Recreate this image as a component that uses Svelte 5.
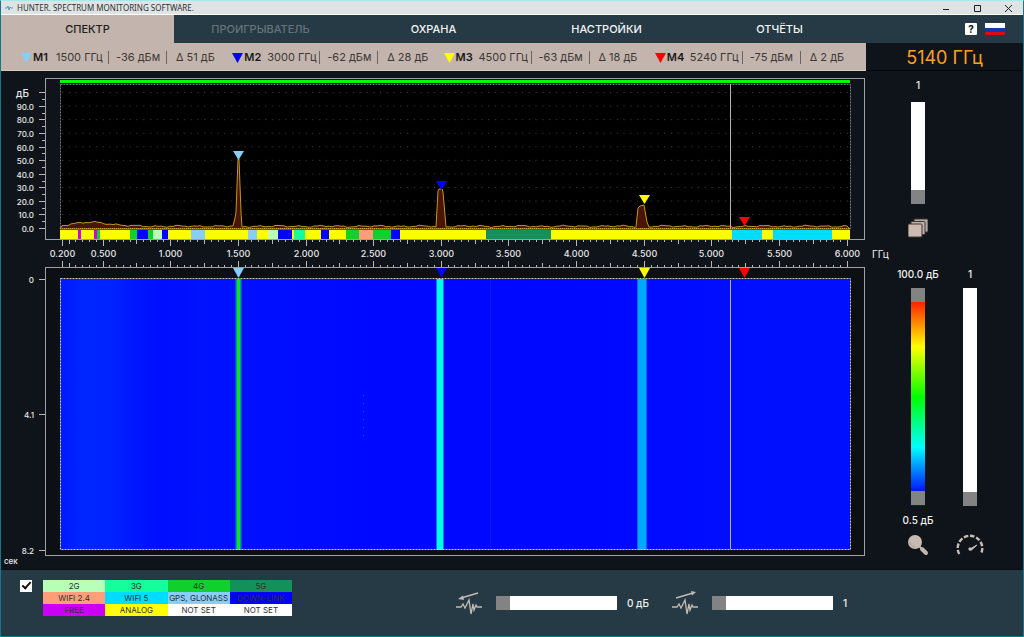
<script lang="ts">
    const tabs = [
        { name: 'СПЕКТР', active: true },
        { name: 'ПРОИГРЫВАТЕЛЬ', disabled: true },
        { name: 'ОХРАНА' },
        { name: 'НАСТРОЙКИ' },
        { name: 'ОТЧЁТЫ' }
    ];

    const markers = [
        { name: 'M1', freq: '1500 ГГц', level: '-36 дБм', delta: '51 дБ', color: '#87cefa', x: 238.5, y: 160 },
        { name: 'M2', freq: '3000 ГГц', level: '-62 дБм', delta: '28 дБ', color: '#0000ff', x: 441.5, y: 190 },
        { name: 'M3', freq: '4500 ГГц', level: '-63 дБм', delta: '18 дБ', color: '#ffff00', x: 644.5, y: 204 },
        { name: 'M4', freq: '5240 ГГц', level: '-75 дБм', delta: '2 дБ', color: '#ff0000', x: 744.5, y: 226 }
    ];

    const YELLOW = '#ffff00';
    const GREEN = '#0fd02c';
    const BLUE = '#0000ff';
    const SKY = '#87cefa';
    const MINT = '#b8ffb8';
    const CYAN = '#00dcff';
    const MAGENTA = '#cc00f5';
    const AQUA = '#14ff9c';
    const SALMON = '#ff9e78';
    const PINE = '#14905a';

    const legend = [
        [
            { name: '2G', color: MINT },
            { name: '3G', color: AQUA },
            { name: '4G', color: GREEN },
            { name: '5G', color: PINE }
        ],
        [
            { name: 'WIFI 2.4', color: SALMON },
            { name: 'WIFI 5', color: CYAN },
            { name: 'GPS, GLONASS', color: SKY },
            { name: 'DOWN-LINK', color: BLUE }
        ],
        [
            { name: 'FREE', color: MAGENTA },
            { name: 'ANALOG', color: YELLOW },
            { name: 'NOT SET', color: '#ffffff' },
            { name: 'NOT SET', color: '#ffffff' }
        ]
    ];

    // allocated bands, everything between them is analog
    const bands: [number, number, string][] = [
        [78, 81, MAGENTA],
        [94, 97, MAGENTA],
        [97, 100, GREEN],
        [130, 137, GREEN],
        [137, 148, BLUE],
        [148, 153, GREEN],
        [153, 162, MINT],
        [162, 168, BLUE],
        [191, 205, SKY],
        [248, 257, SKY],
        [268, 278, MINT],
        [278, 292, BLUE],
        [294, 305, AQUA],
        [321, 329, BLUE],
        [346, 359, GREEN],
        [359, 373, SALMON],
        [373, 391, GREEN],
        [391, 400, BLUE],
        [486, 551, PINE],
        [732, 762, CYAN],
        [773, 832, CYAN]
    ];

    const freqX = (f: number) => Math.floor(35.4 + 135.3 * f) + 0.5;
    const levelY = (db: number) => Math.round(228 - db * 1.357) + 0.5;

    const freqLabels = [0.2, 0.5, 1, 1.5, 2, 2.5, 3, 3.5, 4, 4.5, 5, 5.5, 6];

    function tickSize(step: number) {
        if (step % 10 === 0 || step === 4) return 6;
        return step % 5 === 0 ? 4 : 2;
    }

    // one tick every 50 MHz
    const freqTicks = Array.from({ length: 117 }, (_, i) => {
        const step = i + 4;
        return { x: freqX(step / 20), size: tickSize(step) };
    });

    const levels = [0, 10, 20, 30, 40, 50, 60, 70, 80, 90, 100];
    const minorLevels = levels.slice(0, 10).map((l) => l + 5);

    const times = [
        { label: '0', y: 279.5 },
        { label: '4.1', y: 414.5 },
        { label: '8.2', y: 550.5 }
    ];

    function noise(x: number) {
        return Math.sin(x * 0.31) * 0.6 + Math.sin(x * 0.83 + 2) * 0.4 + Math.sin(x * 0.13) * 0.3;
    }

    const peaks = [
        [[233, 226], [235, 218], [236, 212], [238, 159], [239, 159], [241, 212], [242, 227]],
        [[436, 227], [438, 191], [439, 189], [442, 189], [443, 192], [446, 227]],
        [[636, 227], [638, 208], [640, 206], [644, 205], [647, 222], [649, 227]]
    ];

    function buildTrace() {
        const points: number[][] = [[60, 229]];
        for (let x = 62; x < 849; x += 3) {
            const peak = peaks.find((p) => x >= p[0][0] && x < p[0][0] + 3);
            if (peak) {
                points.push(...peak);
                x = peak[peak.length - 1][0];
                continue;
            }
            const hump = 4 * Math.exp(-(((x - 92) / 26) ** 2));
            points.push([x, Math.round((226.3 - hump + noise(x)) * 10) / 10]);
        }
        points.push([850, 229]);
        return points.map((p) => p.join(',')).join(' ');
    }

    const trace = buildTrace();

    let showBands = $state(true);
    let averaging = $state(1);
    let upper = $state(100);
    let lower = $state(0.5);
    let speed = $state(1);
    let offset = $state(0);
    let gain = $state(1);
</script>

<div class="window">
    <header class="titlebar">
        <svg class="app-icon" viewBox="0 0 8 8" aria-hidden="true">
            <path d="M0 4h2l1-2 1 4 1-3 1 1h2" fill="none" stroke="#4aa0c0" />
        </svg>
        <span class="title">HUNTER. SPECTRUM MONITORING SOFTWARE.</span>
        <div class="window-buttons">
            <button aria-label="Свернуть"><svg viewBox="0 0 9 9"><path d="M1 5.5h6" /></svg></button>
            <button aria-label="Развернуть"><svg viewBox="0 0 9 9"><path d="M1.5 1.5h6v6h-6z" /></svg></button>
            <button aria-label="Закрыть"><svg viewBox="0 0 9 9"><path d="M1 1l7 7M8 1l-7 7" /></svg></button>
        </div>
    </header>

    <div class="topbar">
        <nav class="tabs">
            {#each tabs as tab}
                <button class="tab" class:active={tab.active} disabled={tab.disabled}>{tab.name}</button>
            {/each}
        </nav>
        <div class="tools">
            <button class="help" aria-label="Справка">?</button>
            <button class="flag" aria-label="Русский">
                <svg viewBox="0 0 20 13">
                    <path fill="#ffffff" d="M0 0h20v5H0z" />
                    <path fill="#1238b0" d="M0 5h20v4H0z" />
                    <path fill="#e00808" d="M0 9h20v2l-1 1H1l-1-1z" />
                </svg>
            </button>
        </div>
    </div>

    <div class="content">
        <main>
            <div class="marker-bar">
                {#each markers as m}
                    <div class="marker">
                        <svg viewBox="0 0 11 10" aria-hidden="true"><path d="M0 0h11l-5.5 10z" fill={m.color} /></svg>
                        <strong>{m.name}</strong>
                        <span class="freq">{m.freq}</span>
                        <span class="level">{m.level}</span>
                        <span class="delta">Δ {m.delta}</span>
                    </div>
                {/each}
            </div>

            <svg class="charts" viewBox="1 71 865 498" role="img" aria-label="Спектр и водопад">
                <defs>
                    <pattern id="dots" x="62" y="92" width="6.765" height="13.57" patternUnits="userSpaceOnUse">
                        <rect width="1.2" height="1" fill="#3c3c3c" />
                    </pattern>
                    <linearGradient id="waterfall">
                        <stop offset="0" stop-color="#0018ff" />
                        <stop offset="0.03" stop-color="#0026ff" />
                        <stop offset="0.07" stop-color="#0022ff" />
                        <stop offset="0.09" stop-color="#0018ff" />
                        <stop offset="0.13" stop-color="#000eff" />
                        <stop offset="0.18" stop-color="#0012ff" />
                        <stop offset="0.4" stop-color="#0008ff" />
                        <stop offset="0.7" stop-color="#0008ff" />
                        <stop offset="0.9" stop-color="#0010ff" />
                        <stop offset="1" stop-color="#0010ff" />
                    </linearGradient>
                </defs>

                <!-- spectrum -->
                <rect x="45.5" y="78.5" width="819" height="161" fill="#0f141a" stroke="#a0a0a4" />
                <rect x="60" y="83" width="790" height="146" fill="#000000" />
                <rect x="61" y="85" width="788" height="143" fill="url(#dots)" />
                <rect x="60" y="80" width="790" height="3" fill="#00ff00" />
                <rect class="dashed" x="60.5" y="84.5" width="790" height="144" />
                <polygon points={trace} fill="#4c1408" stroke="#c0981c" />
                <path class="baseline" d="M60 228.5h790" />
                <rect x="60" y="230" width="790" height="9" fill={YELLOW} />
                {#if showBands}
                    {#each bands as [from, to, color]}
                        <rect x={from} y="230" width={to - from} height="9" fill={color} />
                    {/each}
                {/if}
                <path class="cursor" d="M730.5 84v145" />

                {#each levels as l}
                    <path class="tick" d="M39 {levelY(l)}h6" />
                    {#if l < 100}
                        <text x="34" y={levelY(l) + 3} class="y-label">{l.toFixed(1)}</text>
                    {/if}
                {/each}
                <text x="16" y={levelY(100) + 4}>дБ</text>
                {#each minorLevels as l}
                    <path class="tick" d="M42 {levelY(l)}h3" />
                {/each}

                <!-- frequency axis -->
                {#each freqTicks as t}
                    <path class="tick" d="M{t.x} 240v{t.size}M{t.x} 267v-{t.size}" />
                {/each}
                {#each freqLabels as f}
                    <text x={freqX(f)} y="257" class="x-label">{f.toFixed(3)}</text>
                {/each}

                <!-- waterfall -->
                <rect x="45.5" y="267.5" width="819" height="288" fill="#0c1014" stroke="#a0a0a4" />
                <rect x="60" y="279" width="790" height="271" fill="url(#waterfall)" />
                <rect x="235" y="279" width="7" height="271" fill="#0050e8" />
                <rect x="236" y="279" width="5" height="271" fill="#0a94a0" />
                <rect x="237" y="279" width="3" height="271" fill="#10e420" />
                <rect x="436" y="279" width="8" height="271" fill="#0078ff" />
                <rect x="437" y="279" width="6" height="271" fill="#00ffe0" />
                <rect x="637" y="279" width="10" height="271" fill="#0068ff" />
                <rect x="638" y="279" width="8" height="271" fill="#00a8ff" />
                <path d="M490.5 280v269" stroke="#0c14ff" />
                <path d="M363.5 395v45" stroke="#2848ff" stroke-dasharray="1 7" />
                <path class="cursor" d="M730.5 280v269" />
                <rect class="dashed bright" x="60.5" y="278.5" width="790" height="271" />

                {#each times as t}
                    <path class="tick" d="M39 {t.y}h6" />
                    <text x="34" y={t.y + 3} class="y-label">{t.label}</text>
                {/each}
                <text x="4" y="564" class="axis-unit">сек</text>

                {#each markers as m}
                    <path d="M{m.x - 5.5} {m.y - 9}h11l-5.5 9z" fill={m.color} />
                    <path d="M{m.x - 5.5} 268h11l-5.5 10z" fill={m.color} />
                {/each}
            </svg>
        </main>

        <aside>
            <div class="current-freq">5140 ГГц</div>
            <span class="axis-name">ГГц</span>

            <div class="averaging">
                <label for="averaging">{averaging}</label>
                <input id="averaging" class="vertical short" type="range" min="1" max="20" bind:value={averaging} />
                <button class="icon-button" aria-label="Слои">
                    <svg width="20" height="20" viewBox="0 0 20 20" stroke="#3a3634">
                        <rect x="6" y="1" width="14" height="13" rx="1" fill="#b5aaa4" />
                        <rect x="3" y="3.5" width="14" height="13" rx="1" fill="#bfb2ab" />
                        <rect x="0" y="6" width="14" height="13" rx="1" fill="#cdbab0" />
                    </svg>
                </button>
            </div>

            <div class="range-controls">
                <label for="upper">{upper.toFixed(1)} дБ</label>
                <label for="speed">{speed}</label>
                <div class="dual">
                    <input id="upper" class="vertical" type="range" min="0" max="100" step="0.5" bind:value={upper} />
                    <input id="lower" class="vertical" type="range" min="0" max="100" step="0.5" bind:value={lower} />
                </div>
                <input id="speed" class="vertical" type="range" min="1" max="20" bind:value={speed} />
                <label for="lower">{lower.toFixed(1)} дБ</label>
                <span></span>
                <button class="icon-button" aria-label="Масштаб">
                    <svg width="22" height="22" viewBox="0 0 22 22">
                        <path d="M12 12l3 3" stroke="#c2b5ae" stroke-width="2" />
                        <path d="M15 15l4 4" stroke="#c2b5ae" stroke-width="4" stroke-linecap="round" />
                        <circle cx="8" cy="8" r="7" fill="#c8bab2" />
                        <path d="M3 8a5 5 0 0 0 5 5" stroke="#a89c94" fill="none" />
                    </svg>
                </button>
                <button class="icon-button" aria-label="Скорость">
                    <svg width="28" height="22" viewBox="0 0 28 22" fill="none" stroke="#c8beb8">
                        <path d="M3.2 20a12.3 12.3 0 1 1 21.6 0" stroke-width="2.4" stroke-dasharray="4.5 1.8" />
                        <path d="M13 15.5l8-4.5-5.5 5z" fill="#c8beb8" />
                        <circle cx="14" cy="15" r="1.2" fill="#c8beb8" />
                    </svg>
                </button>
            </div>
        </aside>
    </div>

    <footer>
        <input type="checkbox" class="show-bands" aria-label="Показать диапазоны" bind:checked={showBands} />
        <table class="legend">
            <tbody>
                {#each legend as row}
                    <tr>
                        {#each row as cell}
                            <td style="background: {cell.color}">{cell.name}</td>
                        {/each}
                    </tr>
                {/each}
            </tbody>
        </table>
        <div class="levels">
            <div class="level-control">
                <svg width="28" height="24" viewBox="0 0 28 24" fill="none" stroke="#c2bab4" aria-hidden="true">
                    <path d="M23 2L6 7" stroke-width="1.5" />
                    <path d="M3 8l5-3.5 1 4.5z" fill="#c2bab4" stroke="none" />
                    <path d="M1 16h5l2-3 2 4 2-4 2-4 2 14 2-10 1 6 2-5 1 2h5" stroke-width="1.3" />
                </svg>
                <input id="offset" type="range" min="0" max="50" aria-label="Смещение" bind:value={offset} />
                <label for="offset">{offset} дБ</label>
            </div>
            <div class="level-control">
                <svg width="28" height="24" viewBox="0 0 28 24" fill="none" stroke="#c2bab4" aria-hidden="true">
                    <path d="M5 7l17-5" stroke-width="1.5" />
                    <path d="M25 1l-5-1 1 4.5z" fill="#c2bab4" stroke="none" />
                    <path d="M1 16h5l2-3 2 4 2-4 2-4 2 14 2-10 1 6 2-5 1 2h5" stroke-width="1.3" />
                </svg>
                <input id="gain" type="range" min="1" max="20" aria-label="Усиление" bind:value={gain} />
                <label for="gain">{gain}</label>
            </div>
        </div>
    </footer>
</div>

<style>
    :global(body) {
        background: #0f141a;
    }

    .window {
        box-sizing: border-box;
        min-height: 100vh;
        display: flex;
        flex-direction: column;
        border: 1px solid #14788a;
        border-top-color: #a8e6f0;
        background: #0f141a;
        color: #f0f0f0;
        font-family: Inter, "Liberation Sans", sans-serif;
        font-size: 10px;
    }

    button {
        padding: 0;
        border: none;
        background: none;
        font-family: inherit;
        cursor: pointer;
    }

    .titlebar {
        display: flex;
        align-items: center;
        height: 13px;
        padding-left: 4px;
        background: #dfe3e4;
        border-bottom: 1px solid #ffffff;
        color: #303030;
    }

    .app-icon {
        width: 8px;
        height: 8px;
        margin-right: 4px;
    }

    .title {
        font-family: "Noto Sans", sans-serif;
        font-size: 8px;
        line-height: 12px;
    }

    .window-buttons {
        display: flex;
        gap: 22px;
        margin-left: auto;
        padding: 2px 10px 0 0;
    }

    .window-buttons button {
        display: flex;
    }

    .window-buttons svg {
        width: 9px;
        height: 9px;
        fill: none;
        stroke: #202020;
    }

    .topbar,
    .content {
        display: grid;
        grid-template-columns: 1fr 157px;
    }

    .topbar {
        height: 28px;
        background: #263a45;
    }

    .tabs {
        display: grid;
        grid-template-columns: repeat(5, 1fr);
    }

    .tab {
        color: #f4f4f4;
        font-size: 11px;
        font-weight: 500;
    }

    .tab.active {
        background: #c3b5ad;
        color: #202020;
    }

    .tab:disabled {
        color: #66737b;
        cursor: default;
    }

    .tools {
        display: flex;
        align-items: center;
        justify-content: flex-end;
        gap: 8px;
        padding-right: 18px;
    }

    .help {
        width: 12px;
        height: 12px;
        border-radius: 1px;
        background: #ffffff;
        color: #101010;
        font-size: 10px;
        font-weight: 700;
        line-height: 12px;
    }

    .flag {
        display: flex;
        width: 20px;
    }

    .marker-bar {
        box-sizing: border-box;
        display: grid;
        grid-template-columns: repeat(4, 1fr);
        height: 28px;
        padding: 2px 0 0 20px;
        background: #c3b5ad;
        border-bottom: 1px solid #d2cbc6;
        color: #3c3836;
        font-size: 11px;
        line-height: 13px;
        white-space: nowrap;
    }

    .marker {
        display: grid;
        grid-template-columns: 12px 23px 53px 58px 1fr;
        align-items: center;
    }

    .marker svg {
        width: 11px;
        height: 10px;
    }

    .marker strong {
        color: #181818;
        font-weight: 600;
    }

    .freq,
    .level {
        border-right: 1px solid #6a6461;
    }

    .level {
        padding-left: 7px;
    }

    .delta {
        padding-left: 9px;
    }

    .charts {
        display: block;
        width: 100%;
        background: #0f141a;
    }

    .charts text {
        fill: #e8e8e8;
        font-size: 10px;
        font-weight: 500;
    }

    .charts .y-label {
        font-size: 8px;
        text-anchor: end;
    }

    .charts .x-label {
        font-size: 9px;
        text-anchor: middle;
    }

    .charts .axis-unit {
        font-size: 8px;
    }

    .tick {
        stroke: #b8b8b8;
    }

    .dashed {
        fill: none;
        stroke: #7c7c7c;
        stroke-dasharray: 2 1;
    }

    .dashed.bright {
        stroke: #d0d0c0;
    }

    .baseline {
        stroke: #c0b030;
        stroke-dasharray: 1 1;
    }

    .cursor {
        stroke: #b4b4b4;
    }

    aside {
        position: relative;
        display: flex;
        flex-direction: column;
    }

    .current-freq {
        box-sizing: border-box;
        height: 28px;
        border-bottom: 1px solid #04070a;
        color: #ffa01e;
        font-size: 18px;
        line-height: 30px;
        text-align: center;
    }

    /* unit of the frequency axis, hangs over the chart's right edge */
    .axis-name {
        position: absolute;
        top: 204px;
        left: 6px;
        line-height: 14px;
    }

    aside label {
        line-height: 14px;
        font-weight: 500;
        white-space: nowrap;
    }

    .averaging {
        display: flex;
        flex-direction: column;
        align-items: center;
        width: 52px;
        gap: 10px;
        padding: 7px 0 29px 26px;
    }

    .averaging .icon-button {
        padding-top: 4px;
    }

    .range-controls {
        display: grid;
        grid-template-columns: 52px 52px;
        gap: 7px 0;
        justify-items: center;
        padding-left: 26px;
    }

    .icon-button {
        display: flex;
    }

    input[type="range"] {
        appearance: none;
        display: block;
        width: 121px;
        height: 14px;
        margin: 0;
        background: #ffffff;
    }

    input[type="range"]::-webkit-slider-thumb {
        appearance: none;
        width: 14px;
        height: 14px;
        background: #838383;
    }

    input.vertical {
        writing-mode: vertical-lr;
        direction: rtl;
        width: 14px;
        height: 218px;
    }

    input.vertical.short {
        height: 102px;
    }

    .dual {
        position: relative;
        width: 14px;
        height: 218px;
        background: linear-gradient(#ff1e00 6%, #ffff00 27%, #00ff00 50%, #00ffff 73%, #0000ff 95%);
    }

    .dual input {
        position: absolute;
        inset: 0;
        background: none;
        pointer-events: none;
    }

    .dual input::-webkit-slider-thumb {
        pointer-events: auto;
    }

    footer {
        flex: 1;
        display: flex;
        align-items: flex-start;
        padding: 10px 156px 0 19px;
        background: #263a45;
        border-top: 1px solid #080c10;
    }

    .show-bands {
        appearance: none;
        width: 12px;
        height: 12px;
        margin: 0 11px 0 0;
        background: #ffffff;
    }

    .show-bands:checked::before {
        content: "";
        display: block;
        width: 7px;
        height: 3px;
        margin: 2px;
        border: solid #101010;
        border-width: 0 0 2px 2px;
        transform: rotate(-48deg);
    }

    .legend {
        border-collapse: collapse;
        table-layout: fixed;
        width: 249px;
        color: #303030;
        font-size: 8px;
    }

    .legend td {
        height: 12px;
        padding: 0;
        line-height: 12px;
        text-align: center;
        white-space: nowrap;
    }

    .levels {
        display: flex;
        gap: 20px;
        margin-left: auto;
        padding-top: 11px;
    }

    .level-control {
        display: flex;
        align-items: center;
    }

    .level-control input {
        margin: 0 10px 0 13px;
    }

    .level-control label {
        width: 24px;
        font-weight: 500;
        white-space: nowrap;
    }
</style>
